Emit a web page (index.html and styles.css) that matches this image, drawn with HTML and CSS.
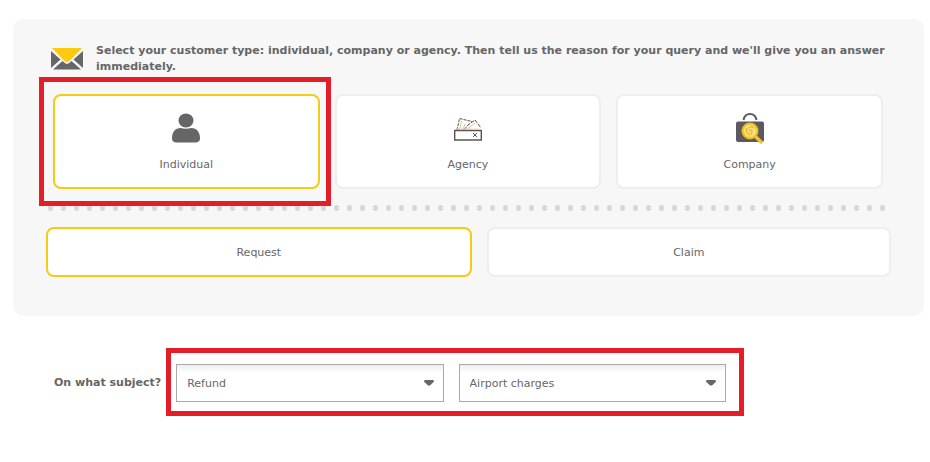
FILE: index.html
```
<!DOCTYPE html>
<html lang="en">
<head>
  <meta charset="UTF-8">
  <meta name="viewport" content="width=device-width, initial-scale=1.0">
  <title>Customer queries</title>
  <link rel="stylesheet" href="styles.css">
</head>
<body>

  <section class="panel">
    <div class="intro">
      <svg class="intro-icon" viewBox="0 0 32 22" aria-hidden="true">
        <path fill="#ffc90e" d="M1 0h30L19 12.500q-3 3-6 0z"/>
        <path fill="#666" d="M0 3l9.500 8.500L0 20zM32 3l-9.500 8.500L32 20zM2 21.500l9.500-8.500 2 1.800q2.500 2.200 5 0l2-1.800 9.500 8.500z"/>
      </svg>
      <p class="intro-text">Select your customer type: individual, company or agency. Then tell us the reason for your query and we'll give you an answer immediately.</p>
    </div>

    <div class="customer-types">
      <div class="marked">
        <button type="button" class="card selected" aria-pressed="true">
          <svg class="card-icon" viewBox="0 0 32 32" aria-hidden="true">
            <ellipse cx="16" cy="8.500" rx="7.500" ry="7" fill="#666"/>
            <path fill="#666" d="M2 26c0-6 3.500-10 8.500-10q5.500 1.500 11 0c5 0 8.500 4 8.500 10 0 3.500-2 4.500-5 4.500H7c-3 0-5-1-5-4.500z"/>
          </svg>
          Individual
        </button>
        <span class="marker"></span>
      </div>
      <button type="button" class="card" aria-pressed="false">
        <svg class="card-icon" viewBox="0 0 32 32" aria-hidden="true">
          <g fill="none" stroke="#5a5552">
            <path fill="#fff" stroke-dasharray="3 1" d="M5 18L7.500 6.500 20 9.500l-2 9z"/>
            <path stroke="#e3bd92" d="M9.500 9L7.500 18M13 12l-2 6"/>
            <path fill="#fff" stroke-dasharray="4 1" d="M12 18l4-5 7-5 6 8"/>
            <path stroke="#e3bd92" d="M15 17l8-6"/>
            <path fill="#fff" stroke-width="1.400" d="M2.700 18.500h26.600v9.500H2.700z"/>
            <path d="M21 21l4 4M25 21l-4 4"/>
            <path stroke="#e8c9a5" d="M5 17.200h22"/>
          </g>
        </svg>
        Agency
      </button>
      <button type="button" class="card" aria-pressed="false">
        <svg class="card-icon" viewBox="0 0 32 32" aria-hidden="true">
          <path fill="none" stroke="#5c5c60" stroke-width="2" d="M9.500 8C11 0 21 0 22.500 8"/>
          <rect x="2" y="9.500" width="28" height="20.500" rx="2" fill="#5c5a60"/>
          <path stroke="#f5c22b" stroke-width="3.500" stroke-linecap="round" d="M22 25l5 5"/>
          <circle cx="16" cy="19" r="7.500" fill="#f8dc72" stroke="#f2bd16" stroke-width="2"/>
          <path fill="none" stroke="#e0a818" d="M19.500 16c-4-3-8 0-7 3.500s5 3.500 5.500 1.500-1-3.500-3-2.500"/>
          <path fill="none" stroke="#fff3b8" d="M12 15.500l4-2M18 22.500l3-3"/>
        </svg>
        Company
      </button>
    </div>

    <div class="dots"></div>

    <div class="query-types">
      <button type="button" class="card selected" aria-pressed="true">Request</button>
      <button type="button" class="card" aria-pressed="false">Claim</button>
    </div>
  </section>

  <form class="subject">
    <label class="subject-label" for="subject">On what subject?</label>
    <div class="subject-fields">
      <div class="field">
        <select id="subject">
          <option>Refund</option>
        </select>
        <svg class="arrow" viewBox="0 0 10 6" aria-hidden="true"><path fill="#666" d="M1 0h8q2 1 0 2.500L6.500 5Q5 6 3.500 5L1 2.500Q-1 1 1 0z"/></svg>
      </div>
      <div class="field">
        <select aria-label="Refund type">
          <option>Airport charges</option>
        </select>
        <svg class="arrow" viewBox="0 0 10 6" aria-hidden="true"><path fill="#666" d="M1 0h8q2 1 0 2.500L6.500 5Q5 6 3.500 5L1 2.500Q-1 1 1 0z"/></svg>
      </div>
    </div>
  </form>

</body>
</html>
```
FILE: styles.css
```
* {
  box-sizing: border-box;
}
body {
  margin: 0;
  background-color: #fff;
  color: #666;
  font-family: Verdana, "DejaVu Sans", sans-serif;
  font-size: 11px;
  line-height: 16px;
}
button,
select {
  font: inherit;
  color: inherit;
}
.panel {
  margin: 19px 6px 0 13px;
  padding: 24px 33px 39px;
  background-color: #f7f7f7;
  border-radius: 10px;
}
.intro {
  display: flex;
  align-items: center;
  gap: 13px;
  padding-left: 5px;
}
.intro-icon {
  flex: none;
  width: 32px;
  height: 22px;
}
.intro-text {
  margin: 0;
  font-weight: bold;
}
.customer-types {
  display: grid;
  grid-template-columns: repeat(3, 1fr);
  gap: 15px;
  margin-top: 19px;
  padding: 0 8px 0 7px;
}
.query-types {
  display: grid;
  grid-template-columns: 20fr 19fr;
  gap: 15px;
}
.card {
  display: flex;
  flex-direction: column;
  align-items: center;
  justify-content: center;
  gap: 13px;
  width: 100%;
  padding: 16px 15px 14px;
  background-color: #fff;
  border: 2px solid #eee;
  border-radius: 8px;
  cursor: pointer;
}
.customer-types .card {
  height: 95px;
}
.card.selected {
  border-color: #f5cb14;
}
.card-icon {
  width: 32px;
  height: 32px;
}
.marked {
  position: relative;
}
.marker {
  position: absolute;
  top: -17px;
  right: -11px;
  bottom: -17px;
  left: -14px;
  border: 5px solid #e31e29;
  pointer-events: none;
}
.dots {
  height: 6px;
  margin: 16px 2px 16px -2px;
  background: radial-gradient(circle, #d9d9d9 3px, transparent 3px) 0 0 / 13px 6px repeat-x;
}
.subject {
  display: flex;
  align-items: center;
  gap: 5px;
  margin-top: 32px;
  padding: 0 20% 0 54px;
}
.subject-label {
  padding-top: 2px;
  font-weight: bold;
  white-space: nowrap;
}
.subject-fields {
  flex: 1;
  display: grid;
  grid-template-columns: 1fr 1fr;
  gap: 15px;
  padding: 11px 13px 9px 5px;
  border: 5px solid #e31e29;
}
.field {
  position: relative;
}
.field select {
  display: block;
  width: 100%;
  height: 38px;
  padding: 1px 30px 0 10px;
  appearance: none;
  background: linear-gradient(#eee, #fff 8px);
  border: 1px solid #aaa;
  border-radius: 0;
}
.arrow {
  position: absolute;
  top: 16px;
  right: 10px;
  width: 10px;
  height: 6px;
  pointer-events: none;
}
```
